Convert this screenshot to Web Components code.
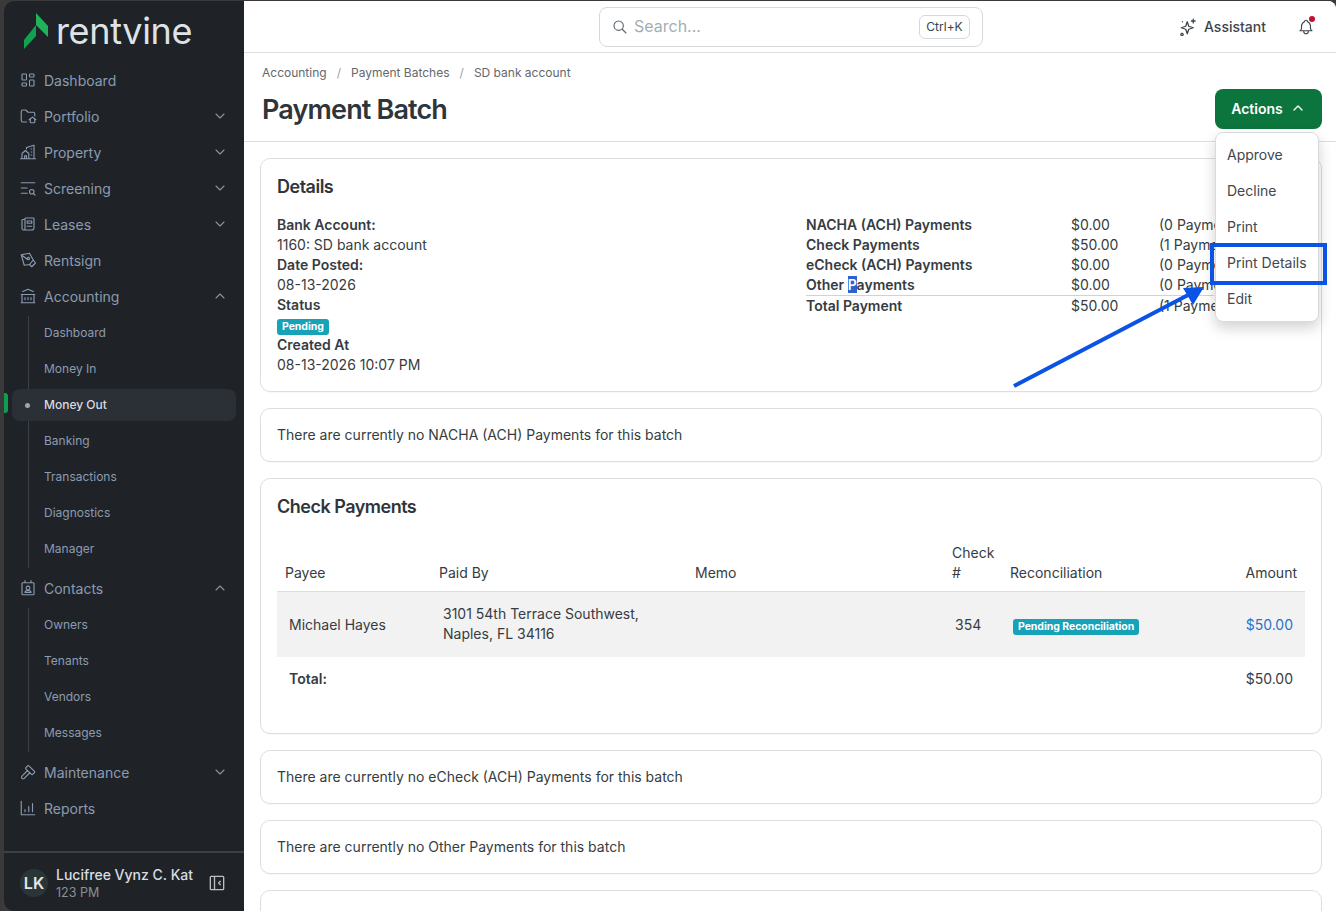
<!DOCTYPE html>
<html lang="en"><head><meta charset="utf-8"><title>Payment Batch</title>
<style>html,body{margin:0;padding:0;background:#3a3a3a;font-family:Inter,"Liberation Sans",sans-serif}</style></head>
<body>
<rv-app></rv-app>
<script>
const P={
dash:'M5 4h4a1 1 0 0 1 1 1v6a1 1 0 0 1-1 1H5a1 1 0 0 1-1-1V5a1 1 0 0 1 1-1M5 16h4a1 1 0 0 1 1 1v2a1 1 0 0 1-1 1H5a1 1 0 0 1-1-1v-2a1 1 0 0 1 1-1M15 12h4a1 1 0 0 1 1 1v6a1 1 0 0 1-1 1h-4a1 1 0 0 1-1-1v-6a1 1 0 0 1 1-1M15 4h4a1 1 0 0 1 1 1v2a1 1 0 0 1-1 1h-4a1 1 0 0 1-1-1V5a1 1 0 0 1 1-1',
port:'M10 20H5a2 2 0 0 1-2-2V6a2 2 0 0 1 2-2h4l3 3h7a2 2 0 0 1 2 2v3M13.500 17l4.500-3.500 4.500 3.500M15 15.500V20a1 1 0 0 0 1 1h4a1 1 0 0 0 1-1v-4.500',
prop:'M2 21h20M4 21v-7l4.500-4 4.500 4v7M7.500 21v-4h2.500v4M10 8V6l10-3v18M16 8h1M16 12h1M16 16h1',
scr:'M3 5h18M3 12h8M3 19h8M17 17m-3 0a3 3 0 1 0 6 0a3 3 0 1 0-6 0M19.500 19.500l2 2',
lease:'M8 6H5a1 1 0 0 0-1 1v11a2 2 0 0 0 4 0V5a1 1 0 0 1 1-1h10a1 1 0 0 1 1 1v12a3 3 0 0 1-3 3H6M11 8h6v3h-6zM11 15h6',
sign:'M3 5l11-2 5 9-5 6-7 1zM3 5l8 6M12.500 11.500a1.500 1.500 0 1 0-.01 0M14 18l3 3 5-5-3-4',
bank:'M3 21h18M3 10h18M5 6l7-3 7 3M4 10v11M20 10v11M8 14v3M12 14v3M16 14v3',
cont:'M5 5h14a1 1 0 0 1 1 1v14a1 1 0 0 1-1 1H5a1 1 0 0 1-1-1V6a1 1 0 0 1 1-1M8 2v3M16 2v3M12 9.500a2.500 2.500 0 1 0 .01 0M8 18c0-2 2-2.500 4-2.500s4 .5 4 2.500z',
ham:'M11.400 10 4 17.400a2.100 2.100 0 0 0 0 3 2.100 2.100 0 0 0 3 0l7.400-7.400M18.100 15.300l2.600-2.600a1 1 0 0 0 0-1.400l-7.600-7.600a1 1 0 0 0-1.400 0L9.100 6.300a1 1 0 0 0 0 1.400l7.600 7.600a1 1 0 0 0 1.400 0z',
rep:'M3 3v18h18M8 17v-3M13 17v-7M18 17V6',
down:'M6 9l6 6 6-6',up:'M6 15l6-6 6 6'};
const ico=(d,s=18,w=1.5,x='')=>`<svg width="${s}" height="${s}" viewBox="0 0 24 24" fill="none" stroke="currentColor" stroke-width="${w}" stroke-linecap="round" stroke-linejoin="round" ${x}><path d="${d}"/></svg>`;
function def(name,css,html){
  customElements.define(name,class extends HTMLElement{
    connectedCallback(){ if(this.shadowRoot)return; const r=this.attachShadow({mode:'open'});
      r.innerHTML=`<style>${css}</style>`+(typeof html==='function'?html(this):html); }
  });
}
def('rv-nav-item',`
:host{display:block;height:36px;position:relative}
.r{height:36px;box-sizing:border-box;padding-bottom:2px;display:flex;align-items:center;color:#8c9bb0;font-size:14px;padding-left:16px;padding-right:16px;gap:8px}
.i{width:16px;height:16px;flex:none;display:block;position:relative}
.i svg{display:block;position:absolute;left:-1px;top:-1px}
.t{flex:1}
.c{display:block;height:16px;color:#8792a2}
.c svg{display:block}
`,h=>{
 const c=h.getAttribute('chev');
 return `<div class="r"><span class="i">${ico(P[h.getAttribute('icon')])}</span><span class="t"><slot></slot></span>${c?`<span class="c">${ico(P[c],16,1.6)}</span>`:''}</div>`;
});
def('rv-sub-item',`
:host{display:block;height:36px;position:relative}
.r{height:36px;box-sizing:border-box;padding-bottom:2px;display:flex;align-items:center;color:#8c9bb0;font-size:12px;padding-left:40px}
:host([active]) .r{color:#d7dbe0;font-weight:500;padding-bottom:1px}
:host([active]) .bg{position:absolute;left:8px;right:8px;top:2px;bottom:2px;background:#2b3036;border-radius:8px}
:host([active]) .dot{position:absolute;left:21px;top:16px;width:5px;height:5px;border-radius:50%;background:#9aa5b1}
:host([active]) .mark{position:absolute;left:0;top:6px;width:4px;height:20px;background:#0f9d4f;border-radius:0 3px 3px 0}
.t{position:relative}
`,h=>`<div class="bg"></div><div class="mark"></div><div class="dot"></div><div class="r"><span class="t"><slot></slot></span></div>`);
def('rv-sub-group',`
:host{display:block;position:relative;margin-bottom:4px}
.l{position:absolute;left:24px;top:1px;bottom:-1px;width:1px;background:#3a4047}
`,`<div class="l"></div><slot></slot>`);
def('rv-sidebar',`
:host{display:flex;flex-direction:column;width:240px;flex:none;background:#1f2328;border-radius:10px 0 0 10px;height:910px;overflow:hidden}
.logo{height:62px;flex:none;display:flex;align-items:center;padding-left:20px;gap:8px;box-sizing:border-box}
.logo svg{display:block;flex:none;margin-top:-2px}
.logo span{font-size:36px;font-weight:400;color:#dfe3e8;letter-spacing:-.35px;line-height:60px;font-family:Inter,sans-serif;position:relative;top:-1px}
.foot{margin-top:auto;height:60px;box-sizing:border-box;border-top:2px solid #3c4146;display:flex;align-items:center;padding:2px 17px 0 16px;gap:8px}
.av{width:28px;height:28px;border-radius:50%;background:#2a3538;color:#e3e6e9;font-size:16px;font-weight:600;display:flex;align-items:center;justify-content:center;flex:none}
.n{flex:1;min-width:0;margin-top:2px}
.nm{font-size:14px;font-weight:500;color:#d9dde1;line-height:18px;white-space:nowrap}
.rl{font-size:12.5px;color:#8a9097;line-height:18px}
.col{color:#b9bfc5;display:block;height:20px;flex:none}
.col svg{display:block}
`,`<div class="logo"><svg width="24" height="36" viewBox="0 0 24 36"><path d="M12 0 24 13V24L12 12z" fill="#1fb25a"/><path d="M0 27 12 12V23L0 36z" fill="#0fa34f"/></svg><span>rentvine</span></div>
<slot></slot>
<div class="foot"><div class="av">LK</div><div class="n"><div class="nm">Lucifree Vynz C. Kat</div><div class="rl">123 PM</div></div><span class="col">${ico('M5 4h14a1 1 0 0 1 1 1v14a1 1 0 0 1-1 1H5a1 1 0 0 1-1-1V5a1 1 0 0 1 1-1M9 4v16M16 10l-2 2 2 2',20,1.6)}</span></div>`);
def('rv-topbar',`
:host{display:grid;grid-template-columns:1fr 384px 1fr;align-items:center;height:51px;border-bottom:1px solid #dcdfe2;background:#fff;flex:none;box-sizing:content-box}
.s{grid-column:2;height:40px;box-sizing:border-box;border:1px solid #d6d9dc;border-radius:8px;display:flex;align-items:center;padding:0 12px;gap:6px;position:relative;left:1px;color:#5f676e}
.s svg{display:block}
.ph{flex:1;font-size:16px;color:#a4adb4;line-height:20px;padding-bottom:2px}
kbd{font:12px Inter,sans-serif;color:#3c4247;border:1px solid #d6d9dc;border-radius:6px;height:24px;width:51px;box-sizing:border-box;display:flex;align-items:center;justify-content:center;padding-bottom:1px}
.r{display:flex;align-items:center;justify-content:flex-end;padding-right:21px;color:#3e444a;font-size:14px}
.a{display:flex;align-items:center;gap:7px;font-weight:500;margin-right:31px}
.b{position:relative;height:18px}
.b svg,.a svg{display:block}
.dot{position:absolute;right:0;top:-2px;width:6px;height:6px;border-radius:50%;background:#c8102e}
`,`<div class="s">${ico('M10 10m-7 0a7 7 0 1 0 14 0a7 7 0 1 0-14 0M21 21l-6-6',16,1.7)}<span class="ph">Search...</span><kbd>Ctrl+K</kbd></div>
<div class="r"><div class="a">${ico('M11 5l2 6 6 2-6 2-2 6-2-6-6-2 6-2zM19 1.500v5M16.500 4h5M4 20.500a1.500 1.500 0 1 0 .01 0M4.500 5v.01',18,1.7)}<span>Assistant</span></div><div class="b">${ico('M10 5a2 2 0 1 1 4 0 7 7 0 0 1 4 6v3a4 4 0 0 0 2 3H4a4 4 0 0 0 2-3v-3a7 7 0 0 1 4-6M9 17v1a3 3 0 0 0 6 0v-1',18,1.5)}<span class="dot"></span></div></div>`);
def('rv-actions',`
:host{display:block;position:relative;width:107px;height:40px}
.btn{height:40px;box-sizing:border-box;padding-bottom:2px;background:#0c743d;border-radius:8px;color:#fff;font-size:14px;font-weight:600;display:flex;align-items:center;justify-content:center;gap:7px}
.btn svg{display:block}
.m{position:absolute;top:43px;left:0;width:104px;height:190px;box-sizing:border-box;background:#fff;border:1px solid #d8dbde;border-radius:8px;box-shadow:0 6px 14px rgba(0,0,0,.18);padding:3px 0;z-index:5}
`,`<div class="btn"><span>Actions</span>${ico(P.up,16,2)}</div><div class="m"><slot></slot></div>`);
def('rv-menu-item',`
:host{display:flex;align-items:center;height:36px;padding-left:11px;font-size:14px;color:#41474d;white-space:nowrap}
`,`<slot></slot>`);
def('rv-page-head',`
:host{display:flex;justify-content:space-between;height:88px;border-bottom:1px solid #dcdfe2;padding:0 14px 0 18px;flex:none}
.bc{font-size:12px;color:#62696f;display:flex;gap:10px;height:20px;align-items:center;margin-top:9px}
.bc i{font-style:normal;color:#9aa0a5}
h1{margin:10px 0 0;font-size:27px;font-weight:600;letter-spacing:-.85px;line-height:36px;color:#2f353a}
.act{padding-top:36px}
`,`<div><div class="bc"><span>Accounting</span><i>/</i><span>Payment Batches</span><i>/</i><span>SD bank account</span></div><h1>Payment Batch</h1></div><div class="act"><slot></slot></div>`);
def('rv-card',`
:host{display:block;border:1px solid #dcdfe2;border-radius:10px;padding:16px;background:#fff;font-size:14px;line-height:20px;color:#363c42;margin-bottom:16px;box-shadow:0 1px 1px rgba(0,0,0,.03)}
h2{margin:0;font-size:18px;font-weight:600;line-height:24px;color:#2f353a;letter-spacing:-.5px}
`,h=>`${h.hasAttribute('heading')?`<h2>${h.getAttribute('heading')}</h2>`:''}<slot></slot>`);
def('rv-badge',`
:host{display:inline-flex;align-items:center;height:16px;padding:0 5px;background:#17a2b8;color:#fff;font-size:10.500px;font-weight:700;border-radius:3px;line-height:16px;letter-spacing:-.05px;vertical-align:middle}
`,`<slot></slot>`);
def('rv-details',`
:host{display:grid;grid-template-columns:529px 1fr;margin-top:16px;font-size:14px;line-height:20px;color:#363c42}
b{font-weight:600;display:block}
.v{height:20px}
.bd{height:20px;display:flex;align-items:flex-start;padding-top:4px;box-sizing:border-box}
.g{display:grid;grid-template-columns:265px 88px 55px;align-content:start;font-size:14px}
.g b{white-space:nowrap}
.h{background:#2f62d0;color:#fff}
.line{grid-column:1/-1;height:1px;background:#cfd3d6}
.ct{white-space:nowrap}
`,`<div><b>Bank Account:</b><div class="v">1160: SD bank account</div><b>Date Posted:</b><div class="v">08-13-2026</div><b>Status</b><div class="bd"><rv-badge>Pending</rv-badge></div><b>Created At</b><div class="v">08-13-2026 10:07 PM</div></div>
<div class="g"><b>NACHA (ACH) Payments</b><span>$0.00</span><span class="ct">(0 Payments)</span><b>Check Payments</b><span>$50.00</span><span class="ct">(1 Payment)</span><b>eCheck (ACH) Payments</b><span>$0.00</span><span class="ct">(0 Payments)</span><b>Other <span class="h">P</span>ayments</b><span>$0.00</span><span class="ct">(0 Payments)</span><div class="line"></div><b>Total Payment</b><span>$50.00</span><span class="ct">(1 Payment)</span></div>`);
def('rv-check-table',`
:host{display:block;margin:24px 0 16px}
table{width:1028px;border-collapse:collapse;table-layout:fixed;font-size:14px;line-height:20px;color:#363c42}
th{font-weight:400;text-align:left;padding:0 8px 8px;vertical-align:bottom;border-bottom:1px solid #dcdfe2}
td{box-sizing:border-box;padding:2px 12px 0;height:65px;background:#f2f2f2;vertical-align:middle}
th:last-child,td:last-child{text-align:right}
th:last-child{padding-right:8px}
tfoot td{background:none;height:44px;padding-top:0}
a{color:#2a73c9;text-decoration:none}
.b{font-weight:600}
td.c{padding-left:11px;padding-top:4px}
td.d{padding-top:0}
td.n{padding-left:11px}
`,`<table><colgroup><col style="width:154px"><col style="width:256px"><col style="width:257px"><col style="width:58px"><col><col style="width:80px"></colgroup>
<thead><tr><th>Payee</th><th>Paid By</th><th>Memo</th><th>Check #</th><th>Reconciliation</th><th>Amount</th></tr></thead>
<tbody><tr><td>Michael Hayes</td><td class="d">3101 54th Terrace Southwest,<br>Naples, FL 34116</td><td></td><td class="n">354</td><td class="c"><rv-badge>Pending Reconciliation</rv-badge></td><td><a>$50.00</a></td></tr></tbody>
<tfoot><tr><td class="b">Total:</td><td></td><td></td><td></td><td></td><td>$50.00</td></tr></tfoot></table>`);
def('rv-annotation',`
:host{position:absolute;inset:0;pointer-events:none;z-index:10;display:block}
svg{position:absolute;left:0;top:0}
`,`<svg width="1336" height="911"><rect x="1212" y="245" width="113" height="38" fill="none" stroke="#0b52e6" stroke-width="4"/><path d="M1014 386 1190 294" stroke="#0b52e6" stroke-width="4" fill="none"/><path d="M1204 287 1183 288 1193 305z" fill="#0b52e6"/></svg>`);
def('rv-app',`
:host{display:flex;position:relative;width:1336px;height:911px;box-sizing:border-box;padding:1px 0 0 4px;overflow:hidden;background:#3a3a3a}
.main{flex:1;min-width:0;background:#fff;border-radius:0 8px 0 0;display:flex;flex-direction:column;overflow:hidden}
.c{padding:16px 14px 0 16px;flex:1;overflow:hidden}
`,`<rv-sidebar>
<rv-nav-item icon="dash">Dashboard</rv-nav-item>
<rv-nav-item icon="port" chev="down">Portfolio</rv-nav-item>
<rv-nav-item icon="prop" chev="down">Property</rv-nav-item>
<rv-nav-item icon="scr" chev="down">Screening</rv-nav-item>
<rv-nav-item icon="lease" chev="down">Leases</rv-nav-item>
<rv-nav-item icon="sign">Rentsign</rv-nav-item>
<rv-nav-item icon="bank" chev="up">Accounting</rv-nav-item>
<rv-sub-group><rv-sub-item>Dashboard</rv-sub-item><rv-sub-item>Money In</rv-sub-item><rv-sub-item active>Money Out</rv-sub-item><rv-sub-item>Banking</rv-sub-item><rv-sub-item>Transactions</rv-sub-item><rv-sub-item>Diagnostics</rv-sub-item><rv-sub-item>Manager</rv-sub-item></rv-sub-group>
<rv-nav-item icon="cont" chev="up">Contacts</rv-nav-item>
<rv-sub-group><rv-sub-item>Owners</rv-sub-item><rv-sub-item>Tenants</rv-sub-item><rv-sub-item>Vendors</rv-sub-item><rv-sub-item>Messages</rv-sub-item></rv-sub-group>
<rv-nav-item icon="ham" chev="down">Maintenance</rv-nav-item>
<rv-nav-item icon="rep">Reports</rv-nav-item>
</rv-sidebar>
<div class="main"><rv-topbar></rv-topbar>
<rv-page-head><rv-actions><rv-menu-item>Approve</rv-menu-item><rv-menu-item>Decline</rv-menu-item><rv-menu-item>Print</rv-menu-item><rv-menu-item>Print Details</rv-menu-item><rv-menu-item>Edit</rv-menu-item></rv-actions></rv-page-head>
<div class="c">
<rv-card heading="Details"><rv-details></rv-details></rv-card>
<rv-card>There are currently no NACHA (ACH) Payments for this batch</rv-card>
<rv-card heading="Check Payments"><rv-check-table></rv-check-table></rv-card>
<rv-card>There are currently no eCheck (ACH) Payments for this batch</rv-card>
<rv-card>There are currently no Other Payments for this batch</rv-card>
<rv-card style="height:80px"></rv-card>
</div></div>
<rv-annotation></rv-annotation>`);
</script>
</body></html>
